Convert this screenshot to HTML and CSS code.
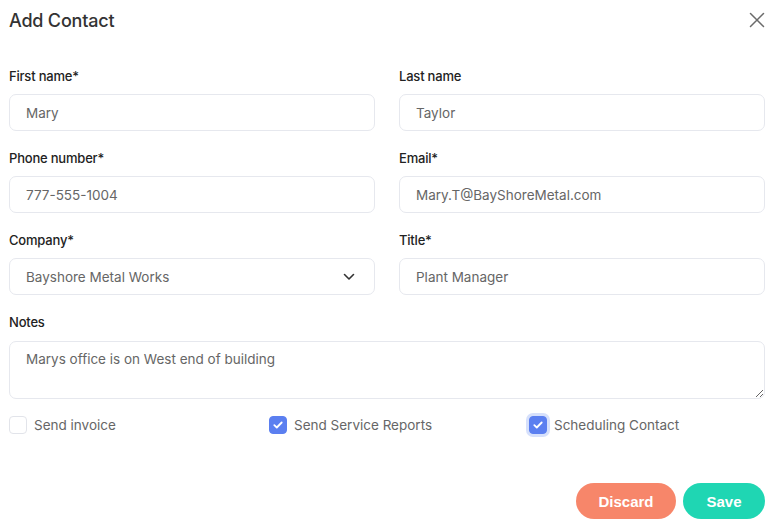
FILE: index.html
```html
<!DOCTYPE html>
<html lang="en">
<head>
  <meta charset="UTF-8">
  <meta name="viewport" content="width=device-width, initial-scale=1.0">
  <title>Add Contact</title>
  <link rel="stylesheet" href="styles.css">
</head>
<body>
  <div class="modal">
    <div class="modal-header">
      <h2>Add Contact</h2>
      <button class="close-btn" aria-label="Close">
        <svg width="16" height="16" viewBox="0 0 16 16"><path d="M1.5 1.5 L14.5 14.5 M14.5 1.5 L1.5 14.5" stroke="#6b6b6b" stroke-width="1.5" stroke-linecap="round"/></svg>
      </button>
    </div>

    <form class="contact-form">
      <div class="form-grid">
        <div class="input-group">
          <label for="first-name">First name*</label>
          <input type="text" id="first-name" value="Mary">
        </div>
        <div class="input-group">
          <label for="last-name">Last name</label>
          <input type="text" id="last-name" value="Taylor">
        </div>
        <div class="input-group">
          <label for="phone">Phone number*</label>
          <input type="text" id="phone" value="777-555-1004">
        </div>
        <div class="input-group">
          <label for="email">Email*</label>
          <input type="text" id="email" value="Mary.T@BayShoreMetal.com">
        </div>
        <div class="input-group">
          <label for="company">Company*</label>
          <div class="select">
            <span>Bayshore Metal Works</span>
            <svg width="12" height="8" viewBox="0 0 12 8"><path d="M1.5 1.5 L6 6 L10.5 1.5" fill="none" stroke="#333" stroke-width="1.6" stroke-linecap="round" stroke-linejoin="round"/></svg>
          </div>
        </div>
        <div class="input-group">
          <label for="title">Title*</label>
          <input type="text" id="title" value="Plant Manager">
        </div>
      </div>

      <div class="input-group">
        <label for="notes">Notes</label>
        <textarea id="notes">Marys office is on West end of building</textarea>
      </div>

      <div class="checks">
        <label class="check">
          <span class="box"></span>
          Send invoice
        </label>
        <label class="check">
          <span class="box checked">
            <svg width="10" height="8" viewBox="0 0 10 8"><path d="M1.3 4.2 L3.8 6.5 L8.7 1.5" fill="none" stroke="#fff" stroke-width="1.8" stroke-linecap="round" stroke-linejoin="round"/></svg>
          </span>
          Send Service Reports
        </label>
        <label class="check">
          <span class="box checked focused">
            <svg width="10" height="8" viewBox="0 0 10 8"><path d="M1.3 4.2 L3.8 6.5 L8.7 1.5" fill="none" stroke="#fff" stroke-width="1.8" stroke-linecap="round" stroke-linejoin="round"/></svg>
          </span>
          Scheduling Contact
        </label>
      </div>

      <div class="actions">
        <button type="button" class="btn btn-discard">Discard</button>
        <button type="submit" class="btn btn-save">Save</button>
      </div>
    </form>
  </div>
</body>
</html>
```

FILE: styles.css
```css
* {
  margin: 0;
  padding: 0;
  box-sizing: border-box;
  font-family: Inter, 'Noto Sans', sans-serif;
}

body {
  background-color: #fff;
  width: 768px;
  height: 524px;
  overflow: hidden;
}

.modal {
  padding: 8px 3px 0 9px;
}

.modal-header {
  display: flex;
  justify-content: space-between;
  align-items: center;
  height: 24px;
}

.modal-header h2 {
  font-size: 18px;
  font-weight: 500;
  color: #333;
  letter-spacing: -0.2px;
}

.close-btn {
  background: none;
  border: none;
  width: 16px;
  height: 16px;
  display: flex;
  cursor: pointer;
}

.contact-form {
  margin-top: 35px;
}

.form-grid {
  display: grid;
  grid-template-columns: 1fr 1fr;
  column-gap: 24px;
}

.input-group {
  margin-bottom: 18px;
}

.input-group label {
  display: block;
  height: 18px;
  line-height: 18px;
  margin-bottom: 9px;
  font-size: 13px;
  font-weight: 500;
  color: #222;
  letter-spacing: -0.2px;
}

.input-group input,
.select {
  width: 100%;
  height: 37px;
  padding: 0 16px;
  border: 1px solid #e6e8ee;
  border-radius: 7px;
  font-size: 13.5px;
  color: #666;
  outline: none;
  background: #fff;
}

.select {
  display: flex;
  justify-content: space-between;
  align-items: center;
  padding-right: 19px;
}

.input-group textarea {
  display: block;
  width: 100%;
  height: 58px;
  margin-top: 10px;
  padding: 9px 16px;
  border: 1px solid #e6e8ee;
  border-radius: 7px;
  font-size: 13.5px;
  color: #666;
  outline: none;
  resize: vertical;
}

.input-group label[for="notes"] {
  margin-bottom: 0;
}

.checks {
  display: flex;
  margin-top: -1px;
  height: 18px;
  align-items: center;
}

.check {
  display: flex;
  align-items: center;
  gap: 7px;
  font-size: 13.5px;
  color: #666;
  width: 260px;
  flex-shrink: 0;
}

.check:last-child {
  width: auto;
}

.box {
  width: 18px;
  height: 18px;
  border: 1px solid #e2e4ea;
  border-radius: 4px;
  display: flex;
  align-items: center;
  justify-content: center;
  flex-shrink: 0;
}

.box.checked {
  background-color: #5b7ff0;
  border-color: #5b7ff0;
}

.box.focused {
  box-shadow: 0 0 0 3px #d6e0fb;
}

.actions {
  display: flex;
  justify-content: flex-end;
  gap: 7px;
  margin-top: 49px;
}

.btn {
  height: 36px;
  border: none;
  border-radius: 18px;
  color: #fff;
  font-family: 'Liberation Sans', Arial, sans-serif;
  font-size: 15px;
  font-weight: 600;
  cursor: pointer;
}

.btn-discard {
  width: 100px;
  background-color: #f7866a;
}

.btn-save {
  width: 82px;
  background-color: #1fd6b3;
}
```
